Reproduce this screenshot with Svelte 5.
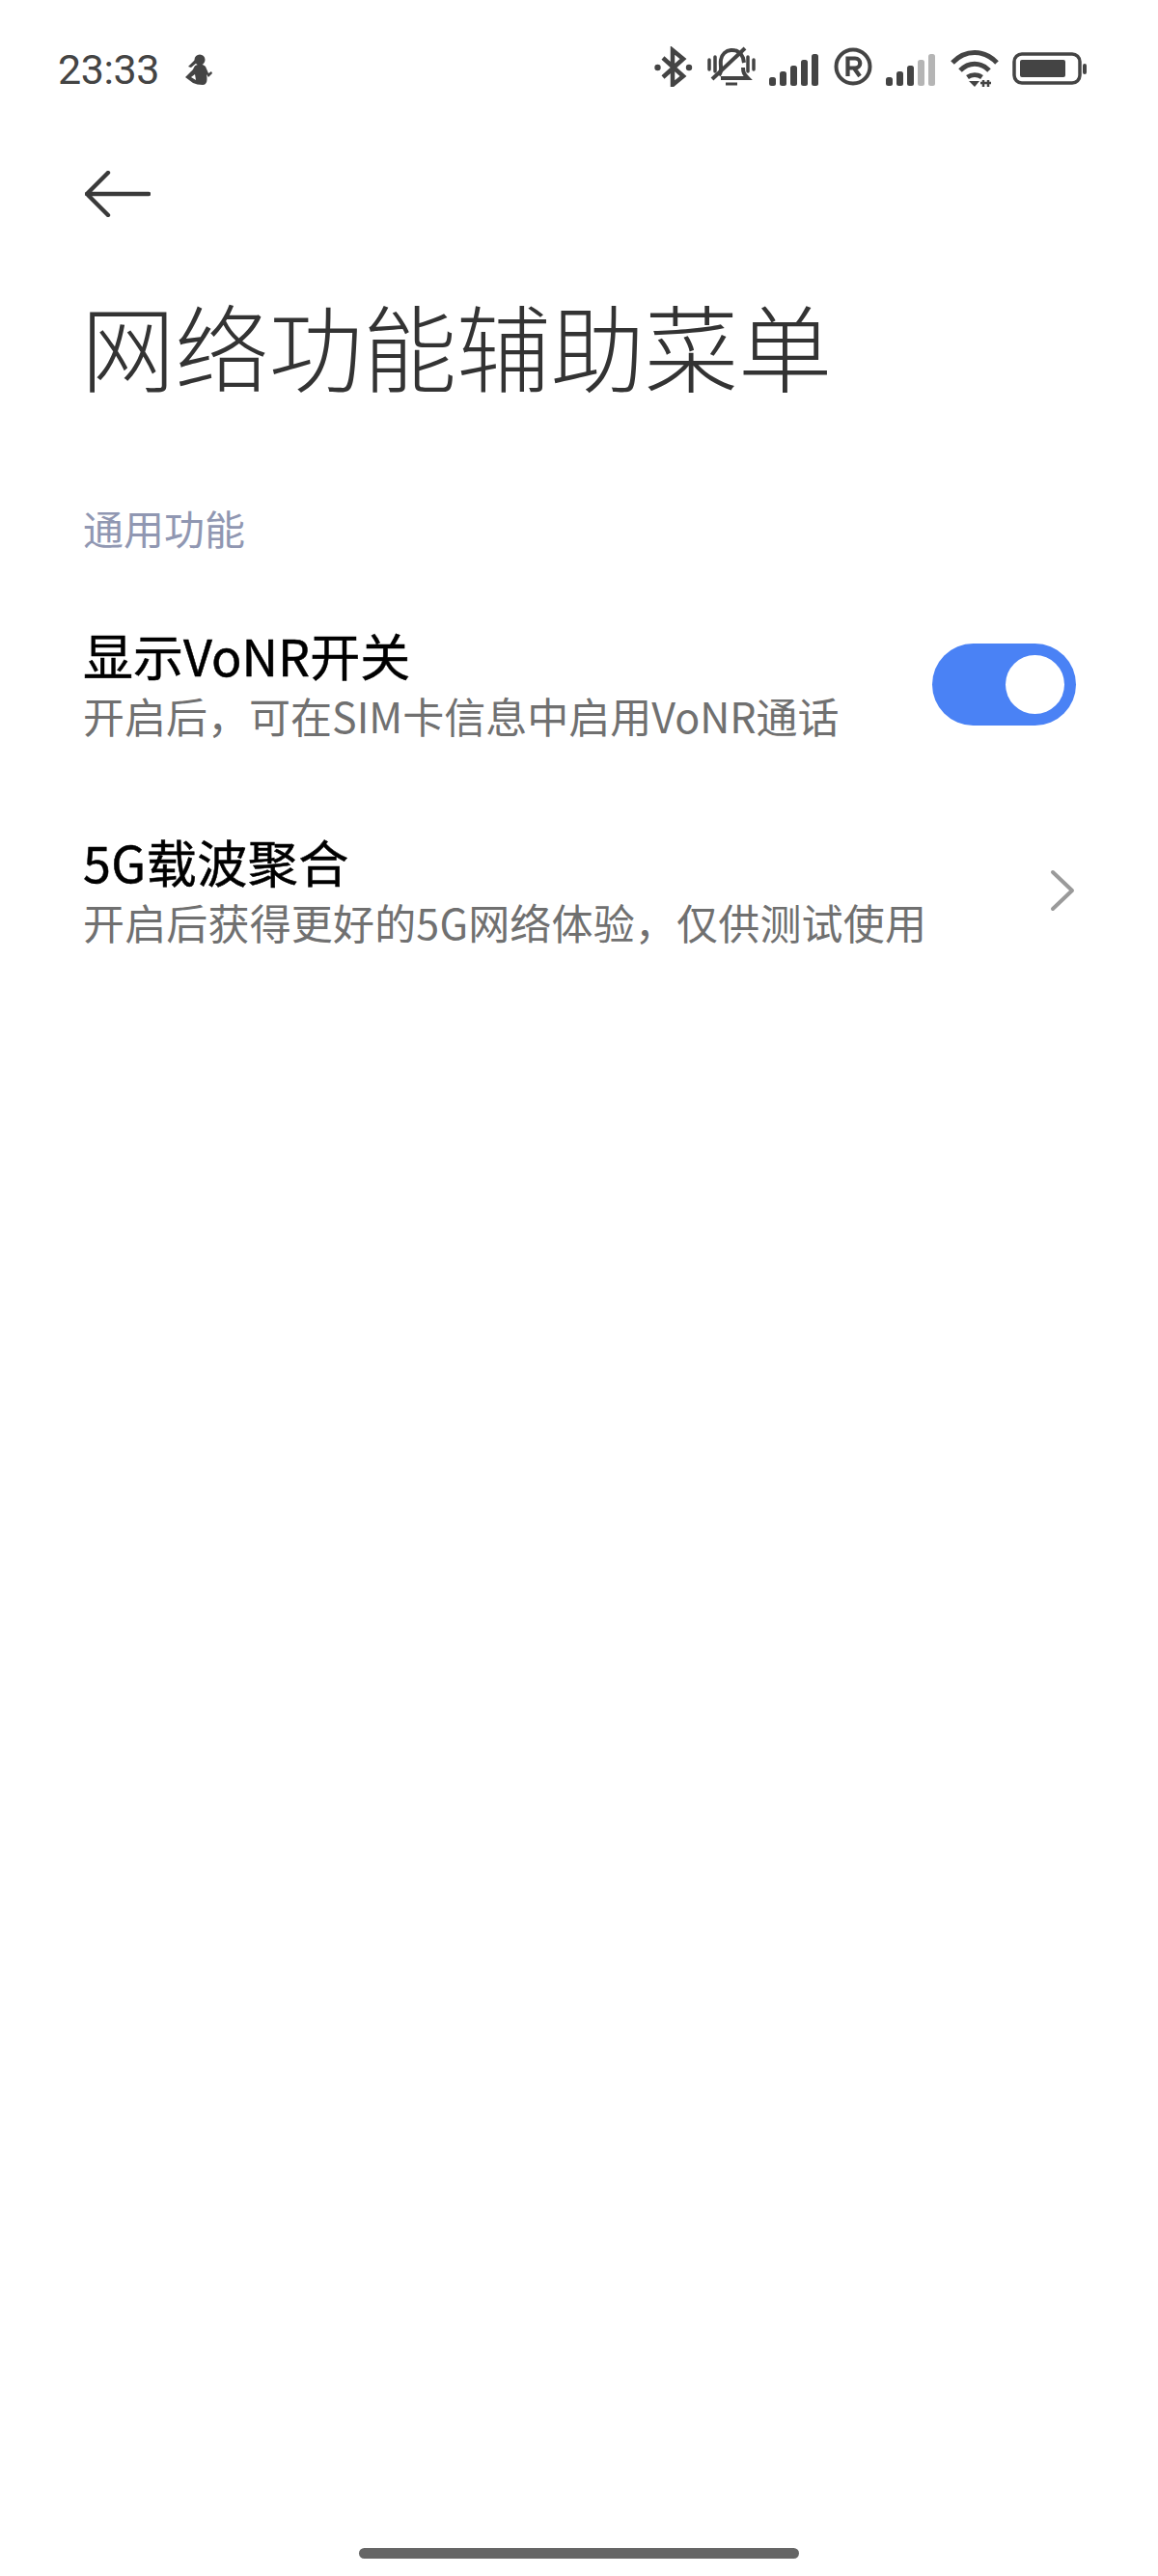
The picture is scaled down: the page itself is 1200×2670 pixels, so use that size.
<script>
  const bars = [
    { x: 0, h: 9 },
    { x: 11, h: 15 },
    { x: 22, h: 21 },
    { x: 33, h: 27 },
    { x: 44, h: 33 }
  ];
</script>

<div class="page">
  <div class="status">
    <span class="time">23:33</span>
    <svg class="person" width="28" height="32" viewBox="0 0 28 32">
      <circle cx="15" cy="6" r="5.5" fill="#444" />
      <path d="M3 13 L11 5 L13 8 L6 14 Z" fill="#444" />
      <path d="M13 11 C8 12 10 15 6 18 L0 24 L8 30 Q12 32 18 32 C23 32 23 26 22 21 L24 24 L28 20 L27 18 L24 20 L21 13 C19 11 16 10 13 11 Z" fill="#444" />
      <path d="M6 24 L10 21 L11 27 Z" fill="#fff" />
    </svg>
    <span class="spacer"></span>
    <div class="icons">
      <svg width="40" height="42" viewBox="0 0 40 42" fill="none" stroke="#444" stroke-width="4.5">
        <path d="M9 12 L30 31 L19 40 V4 L30 13 L9 32" />
        <circle cx="3.5" cy="22" r="3.2" fill="#444" stroke="none" />
        <circle cx="36" cy="22" r="3.2" fill="#444" stroke="none" />
      </svg>
      <svg width="50" height="42" viewBox="0 0 50 42" fill="none" stroke="#444" stroke-width="4">
        <path d="M12 30 C16 26 13 20 14 14 C16 2 32 0 37 12 L38 17" />
        <path d="M37 22 C37 27 38 29 42 33 H14" />
        <path d="M5 34 L39 2" />
        <path d="M2 14 V24 M8 11 V26 M42 11 V26 M48 14 V24" stroke-width="3.5" stroke-linecap="round" />
        <path d="M19 39 H31" stroke-width="3" />
      </svg>
      <svg width="52" height="36" viewBox="0 0 52 36" fill="#444">
        {#each bars as b}
          <rect x={b.x} y={35 - b.h} width="7" height={b.h} rx="2.5" />
        {/each}
      </svg>
      <svg width="40" height="42" viewBox="0 0 40 42" fill="none" stroke="#444">
        <circle cx="20" cy="21" r="17.5" stroke-width="4" />
        <path d="M14.5 31 V12.5 H22 C29 12.5 29 22.5 22 22.5 H14.5 M21 22.5 L27 31" stroke-width="4.2" />
      </svg>
      <svg width="52" height="36" viewBox="0 0 52 36">
        {#each bars as b, i}
          <rect x={b.x} y={35 - b.h} width="7" height={b.h} rx="2.5" fill={i > 2 ? '#b5b5b5' : '#444'} />
        {/each}
      </svg>
      <svg width="50" height="38" viewBox="0 0 50 38" fill="none" stroke="#444" stroke-width="5">
        <path d="M2 13 C15 -1 35 -1 48 13" />
        <path d="M10 21 C19 12 31 12 40 21" />
        <path d="M17.5 28 C22 25 28 25 32.5 28" />
        <path d="M19 32 L25 38 L30 32 Z" fill="#444" stroke="none" />
        <path d="M34 31 V38 M39 31 V38 M31 34 H42" stroke-width="2.5" />
      </svg>
      <svg class="battery" width="78" height="34" viewBox="0 0 78 34" fill="none">
        <rect x="2" y="2" width="68" height="30" rx="8" stroke="#444" stroke-width="3.5" />
        <rect x="8" y="8" width="47" height="18" rx="2" fill="#444" />
        <rect x="73" y="12" width="4" height="11" rx="2" fill="#444" />
      </svg>
    </div>
  </div>

  <header class="nav">
    <svg width="68" height="48" viewBox="0 0 68 48" fill="none" stroke="#3a3a3a" stroke-width="4.4" stroke-linecap="round" stroke-linejoin="round">
      <path d="M24 2 L2 24 L24 46 M2 24 H66" />
    </svg>
  </header>

  <h1>网络功能辅助菜单</h1>

  <div class="label">通用功能</div>

  <div class="row first">
    <div class="text">
      <div class="title">显示VoNR开关</div>
      <div class="sub">开启后，可在SIM卡信息中启用VoNR通话</div>
    </div>
    <div class="toggle"><span class="knob"></span></div>
  </div>

  <div class="row second">
    <div class="text">
      <div class="title">5G载波聚合</div>
      <div class="sub">开启后获得更好的5G网络体验，仅供测试使用</div>
    </div>
    <svg class="chev" width="26" height="44" viewBox="0 0 26 44" fill="none" stroke="#9a9a9a" stroke-width="4" stroke-linecap="round" stroke-linejoin="round">
      <path d="M3 3 L23 22 L3 41" />
    </svg>
  </div>

  <div class="grow"></div>
  <div class="homebar"></div>
</div>

<style>
  :global(body) {
    margin: 0;
    background: #fff;
  }
  .page {
    width: 1200px;
    height: 2670px;
    display: flex;
    flex-direction: column;
    background: #fff;
    font-family: "Noto Sans CJK SC", "Noto Sans", sans-serif;
    overflow: hidden;
  }
  .status {
    height: 44px;
    margin-top: 50px;
    padding: 0 73px 0 60px;
    display: flex;
    align-items: center;
  }
  .time {
    font-family: Roboto, "Noto Sans", sans-serif;
    font-size: 43px;
    line-height: 44px;
    color: #444;
    letter-spacing: -0.4px;
  }
  .person {
    margin-left: 27px;
  }
  .spacer {
    flex: 1;
  }
  .icons {
    display: flex;
    align-items: flex-end;
    gap: 14.5px;
    padding-bottom: 6px;
  }
  .battery {
    margin-bottom: 2px;
  }
  .nav {
    padding: 83px 0 0 88px;
    height: 48px;
  }
  .nav svg {
    display: block;
  }
  h1 {
    margin: 67px 0 0 84px;
    font-size: 97.3px;
    line-height: 130px;
    font-weight: 300;
    color: #333;
  }
  .label {
    margin: 95px 0 0 86px;
    font-size: 42px;
    line-height: 60px;
    color: #9097b2;
  }
  .row {
    display: flex;
    align-items: center;
    justify-content: space-between;
    padding: 0 85px 0 86px;
  }
  .row.first {
    margin-top: 70px;
  }
  .row.second {
    margin-top: 90px;
    padding-right: 86px;
  }
  .row.second .title {
    letter-spacing: 0.5px;
  }
  .row.second .sub {
    letter-spacing: 0.17px;
  }
  .title {
    font-size: 52px;
    line-height: 64px;
    font-weight: 400;
    -webkit-text-stroke: 0.5px #000;
    color: #000;
  }
  .sub {
    font-size: 43px;
    line-height: 60px;
    color: #707070;
  }
  .toggle {
    width: 149px;
    height: 85px;
    border-radius: 43px;
    background: #4a82f5;
    display: flex;
    align-items: center;
    justify-content: flex-end;
    padding-right: 12px;
    box-sizing: border-box;
  }
  .knob {
    width: 61px;
    height: 61px;
    border-radius: 50%;
    background: #fff;
  }
  .grow {
    flex: 1;
  }
  .homebar {
    width: 456px;
    height: 11px;
    border-radius: 6px;
    background: #666;
    margin: 0 auto 18px;
    flex: none;
  }
</style>
